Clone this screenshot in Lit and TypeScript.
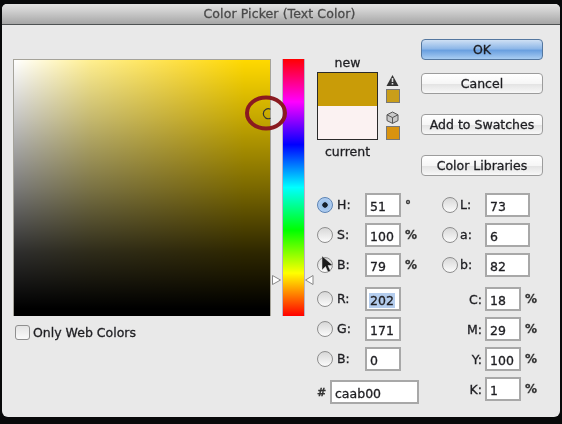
import { LitElement, html, css, svg } from "lit";
import { customElement } from "lit/decorators.js";

type Row = { label: string; value: string; unit?: string; radio?: boolean; on?: boolean; sel?: boolean };

const hsb: Row[] = [
  { label: "H:", value: "51", unit: "°", radio: true, on: true },
  { label: "S:", value: "100", unit: "%", radio: true },
  { label: "B:", value: "79", unit: "%", radio: true },
];
const rgb: Row[] = [
  { label: "R:", value: "202", radio: true, sel: true },
  { label: "G:", value: "171", radio: true },
  { label: "B:", value: "0", radio: true },
];
const lab: Row[] = [
  { label: "L:", value: "73", radio: true },
  { label: "a:", value: "6", radio: true },
  { label: "b:", value: "82", radio: true },
];
const cmyk: Row[] = [
  { label: "C:", value: "18", unit: "%" },
  { label: "M:", value: "29", unit: "%" },
  { label: "Y:", value: "100", unit: "%" },
  { label: "K:", value: "1", unit: "%" },
];

@customElement("app-root")
export class AppRoot extends LitElement {
  static styles = css`
    :host {
      display: block;
      width: 562px;
      height: 424px;
      background: #08090a;
      overflow: hidden;
      font-family: "DejaVu Sans", sans-serif;
      font-size: 12.5px;
      color: #1e1e22;
    }
    .window {
      position: relative;
      margin: 4px 0 0 2px;
      width: 558px;
      height: 413px;
      background: #e9e9e9;
      border-radius: 5px 5px 6px 6px;
      overflow: hidden;
      filter: blur(0.35px);
      -webkit-text-stroke: 0.3px currentColor;
    }
    .titlebar {
      height: 21px;
      background: linear-gradient(#e2e2e2, #d2d2d2 30%, #a6a6a6);
      border-bottom: 1px solid #4e5253;
      display: flex;
      align-items: center;
      justify-content: center;
      font-size: 12.5px;
      letter-spacing: 0.1px;
      color: #4a4a4a;
      box-sizing: border-box;
      padding-right: 3px;
      padding-bottom: 1px;
    }
    .main {
      display: flex;
      padding-left: 11px;
    }
    .left {
      padding-top: 34px;
      width: 258px;
      flex: none;
    }
    .field {
      width: 258px;
      height: 257px;
      box-sizing: border-box;
      border: 1px solid #a5a39a;
      border-bottom: 0;
      background:
        linear-gradient(rgba(0, 0, 0, 0), rgba(0, 0, 0, 0.22) 22%, rgba(0, 0, 0, 0.52) 50%, rgba(0, 0, 0, 0.82) 75%, #000 97%),
        linear-gradient(90deg, #fff, #ffef90 30%, #ffe040 65%, #ffd900 90%);
    }
    .web {
      display: flex;
      align-items: center;
      gap: 3px;
      margin: 9px 0 0 2px;
    }
    .check {
      width: 13px;
      height: 13px;
      border: 1px solid #8f8f8f;
      border-radius: 3px;
      background: linear-gradient(#e4e4e4, #fafafa);
    }
    .hue {
      flex: none;
      width: 21px;
      height: 257px;
      margin: 34px 0 0 12px;
      box-shadow: -1px 0 0 #b9b0c4, 1px 0 0 #b9b0c4;
      background: linear-gradient(#f00, #f0f 16.67%, #00f 33.33%, #0ff 50%, #0f0 66.67%, #ff0 83.33%, #f00);
    }
    .right {
      width: 256px;
      flex: none;
    }
    .top {
      display: flex;
      height: 168px;
      padding-left: 13px;
    }
    .preview {
      width: 61px;
      flex: none;
      padding-top: 27px;
      text-align: center;
    }
    .cap {
      height: 20px;
      line-height: 20px;
      white-space: nowrap;
      display: flex;
      justify-content: center;
    }
    .new { line-height: 22px; }
    .cur { margin-top: 2px; }
    .sw {
      width: 61px;
      height: 68px;
      box-sizing: border-box;
      border: 1px solid #2a2a2a;
      background: linear-gradient(#c99c08 0 50%, #fbf2f2 50%);
    }
    .gamut {
      width: 28px;
      flex: none;
      padding: 49px 0 0 8px;
      display: flex;
      flex-direction: column;
      align-items: flex-start;
    }
    .gamut svg { display: block; }
    .chip {
      width: 14px;
      height: 14px;
      box-sizing: border-box;
      border: 1px solid #777;
      margin: 2px 0 8px;
    }
    .buttons {
      padding-top: 14px;
      margin-left: 7px;
      display: flex;
      flex-direction: column;
      gap: 20px;
    }
    .btn {
      width: 122px;
      height: 21px;
      box-sizing: border-box;
      border: 1px solid #9c9c9c;
      border-radius: 4px;
      background: linear-gradient(#fff, #f6f6f6 50%, #e4e4e4 55%, #f8f8f8);
      display: flex;
      align-items: center;
      justify-content: center;
      white-space: nowrap;
    }
    .btn.ok {
      border-color: #54779f;
      margin-bottom: -7px;
      background: linear-gradient(#cfe0f4, #8fb8e8 45%, #6aa0e0 55%, #a9cdf2);
    }
    .fields {
      display: flex;
      padding-left: 13px;
    }
    .col { width: 125px; flex: none; }
    .group { display: flex; flex-direction: column; gap: 6px; }
    .group + .group { margin-top: 10px; }
    .row {
      display: flex;
      align-items: center;
      height: 24px;
    }
    .radio {
      width: 16px;
      height: 16px;
      box-sizing: border-box;
      border-radius: 50%;
      border: 1px solid #8e8e8e;
      background: linear-gradient(#d8d8d8, #fbfbfb);
      flex: none;
    }
    .radio.on {
      border-color: #5b83b5;
      background: radial-gradient(circle, #16202c 0 2.4px, #9cc0ea 3px, #bcd6f5 100%);
    }
    .lbl { width: 32px; padding: 0 0 2px 4px; box-sizing: border-box; flex: none; }
    .labcol .lbl { width: 27px; padding-left: 2px; }
    .labcol .cmyk .lbl { width: 43px; padding: 0 3px 0 0; text-align: right; }
    .input {
      box-sizing: border-box;
      height: 24px;
      width: 36px;
      flex: none;
      border: 2px solid #a8a8a8;
      background: #fff;
      padding: 2px 0 0 3px;
      display: flex;
      align-items: center;
    }
    .input.wide { width: 45px; }
    .input.hash { width: 89px; }
    .sel { background: #b4cdee; padding: 0 1px; margin-left: -1px; }
    .unit { margin-left: 4px; font-weight: 700; color: #333; font-size: 12px; }
    .hashrow { margin-top: 9px; }
    .hashmark { width: 13px; flex: none; font-weight: 700; font-size: 11px; color: #333; }
    .overlay { position: absolute; left: 0; top: 0; pointer-events: none; }
  `;

  private row(r: Row, wide = false) {
    return html`<div class="row">
      ${r.radio ? html`<span class="radio ${r.on ? "on" : ""}"></span>` : null}
      <span class="lbl">${r.label}</span>
      <span class="input ${wide ? "wide" : ""}">${r.sel ? html`<span class="sel">${r.value}</span>` : r.value}</span>
      ${r.unit ? html`<span class="unit">${r.unit}</span>` : null}
    </div>`;
  }

  render() {
    return html`<div class="window">
      <div class="titlebar">Color Picker (Text Color)</div>
      <div class="main">
        <div class="left">
          <div class="field"></div>
          <div class="web"><span class="check"></span>Only Web Colors</div>
        </div>
        <div class="hue"></div>
        <div class="right">
          <div class="top">
            <div class="preview">
              <div class="cap new">new</div>
              <div class="sw"></div>
              <div class="cap cur">current</div>
            </div>
            <div class="gamut">
              <svg width="13" height="13" viewBox="0 0 13 13"><path d="M6.500 1 12.500 12H.500Z" fill="#333"/><path d="M6.500 4v4" stroke="#ddd" stroke-width="1.600"/><path d="M6.500 9v1.500" stroke="#ddd" stroke-width="1.600"/></svg>
              <div class="chip" style="background:#c99e1a"></div>
              <svg width="13" height="13" viewBox="0 0 13 13"><path d="M6.500 1 12 3.800V9.600L6.500 12.400 1 9.600V3.800Z" fill="#c9c9c9" stroke="#555"/><path d="M1 3.800 6.500 6.600 12 3.800M6.500 6.600v5.800" fill="none" stroke="#555"/></svg>
              <div class="chip" style="background:#d9930f"></div>
            </div>
            <div class="buttons">
              <div class="btn ok">OK</div>
              <div class="btn">Cancel</div>
              <div class="btn">Add to Swatches</div>
              <div class="btn">Color Libraries</div>
            </div>
          </div>
          <div class="fields">
            <div class="col">
              <div class="group">${hsb.map((r) => this.row(r))}</div>
              <div class="group">${rgb.map((r) => this.row(r))}</div>
              <div class="row hashrow">
                <span class="hashmark">#</span>
                <span class="input hash">caab00</span>
              </div>
            </div>
            <div class="col labcol">
              <div class="group">${lab.map((r) => this.row(r, true))}</div>
              <div class="group cmyk">${cmyk.map((r) => this.row(r))}</div>
            </div>
          </div>
        </div>
      </div>
      <svg class="overlay" width="558" height="413" viewBox="0 0 558 413">
        ${svg`<path d="M268.500 105.200a5 5 0 1 0 0 9" fill="none" stroke="#333" stroke-width="1.200"/>
        <ellipse cx="264" cy="109" rx="19" ry="15.500" fill="none" stroke="#8a1a20" stroke-width="4"/>
        <path d="M270.500 271.500 278.500 276 270.500 280.500Z" fill="#fff" stroke="#888"/>
        <path d="M311 271.500 303.500 276 311 280.500Z" fill="#fff" stroke="#888"/>
        <path d="M320 252V266L323.500 262.500 326 268 328.500 267 326 261.500H331Z" fill="#1a1a1a" stroke="#ddd" stroke-width="0.500"/>`}
      </svg>
    </div>`;
  }
}
